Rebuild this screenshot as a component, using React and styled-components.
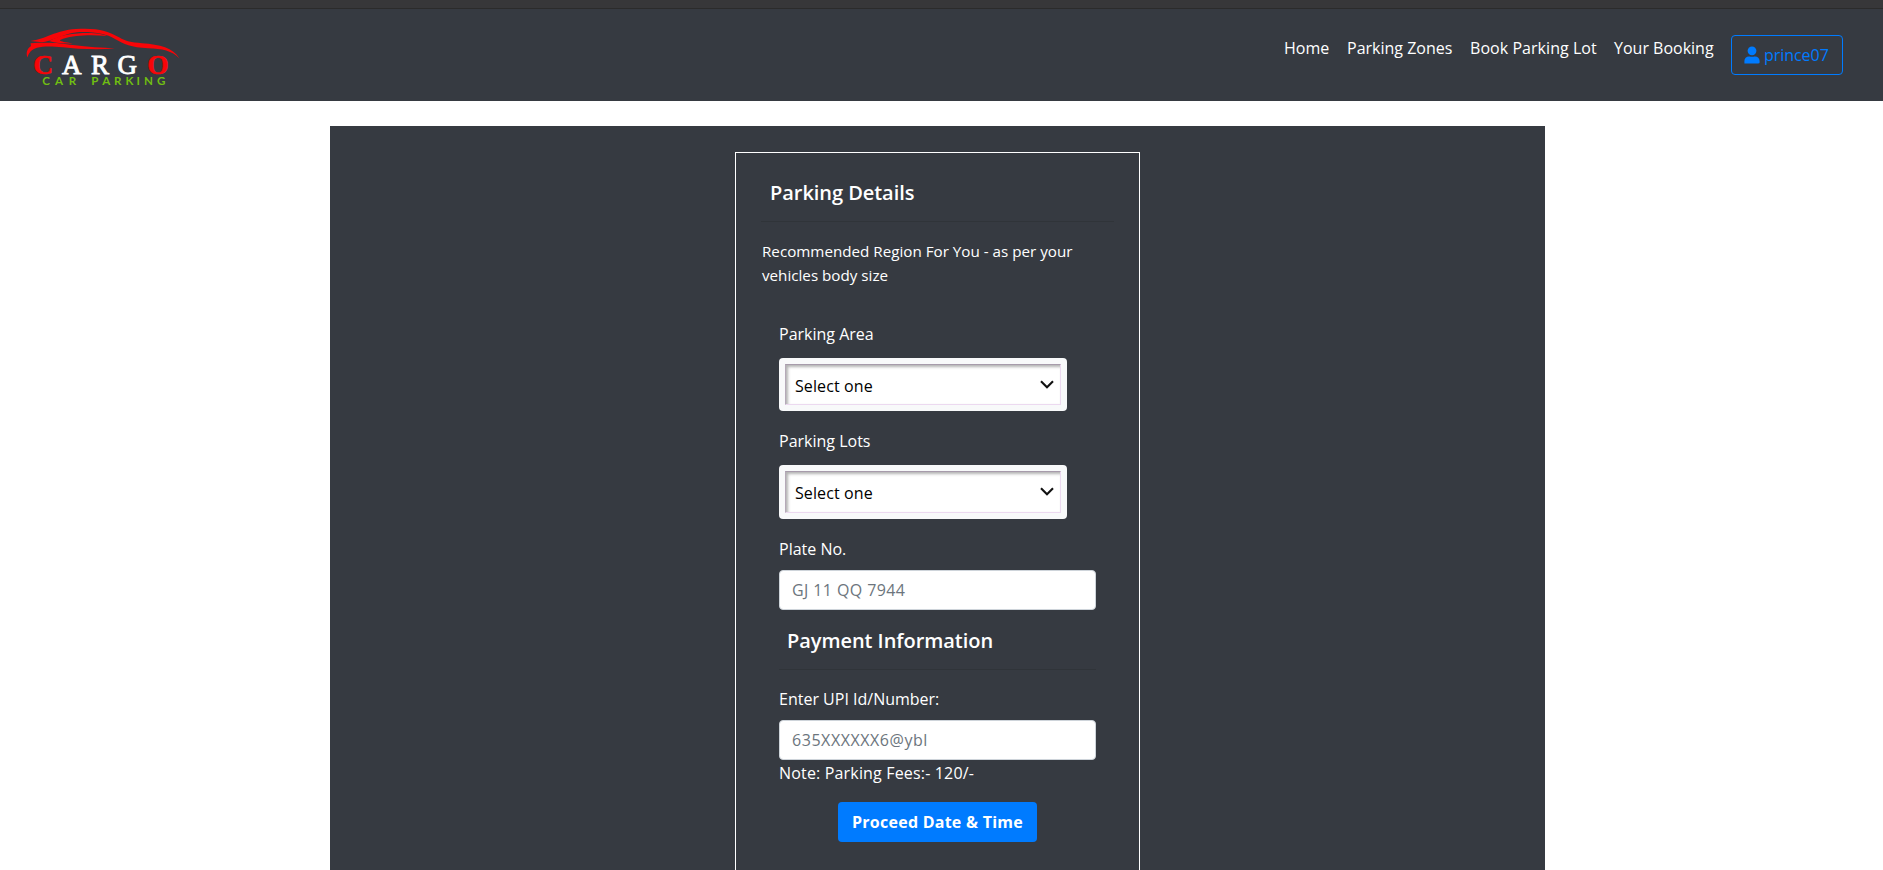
import React from "react";
import styled, { createGlobalStyle } from "styled-components";

const GlobalStyle = createGlobalStyle`
  *, *::before, *::after { box-sizing: border-box; }
  html, body { margin: 0; height: 100%; overflow: hidden; background: #fff; }
  body {
    font-family: "Segoe UI", "Open Sans", "Noto Sans", sans-serif;
    font-size: 16px;
    line-height: 24px;
    color: #fff;
  }
`;

const Page = styled.div`
  height: 870px;
  overflow: hidden;
  display: flex;
  flex-direction: column;
`;

const TopStrip = styled.div`
  flex: none;
  height: 9px;
  background: #373739;
  border-bottom: 1px solid #2b2b2b;
`;

const Header = styled.header`
  flex: none;
  height: 92px;
  background: #363a41;
  display: flex;
  justify-content: space-between;
  align-items: flex-start;
  padding: 15px 40px 0 22px;
`;

const Logo = styled.svg`
  display: block;
  width: 162px;
  height: 66px;
`;

const Nav = styled.nav`
  display: flex;
  align-items: flex-start;
  padding-top: 11px;
`;

const NavLink = styled.a`
  width: ${(p) => p.$w}px;
  padding: 1px 0 0 1px;
  letter-spacing: ${(p) => p.$ls || 0}px;
  white-space: nowrap;
`;

const UserButton = styled.button`
  display: flex;
  align-items: center;
  width: 112px;
  height: 40px;
  padding: 0 0 1px 12px;
  border: 1px solid #007bff;
  border-radius: 4px;
  background: transparent;
  color: #007bff;
  font: inherit;
  letter-spacing: -0.05px;
  gap: 4px;
`;

const Panel = styled.main`
  flex: none;
  width: 1215px;
  height: 744px;
  margin: 25px 0 0 330px;
  padding-top: 26px;
  background: #363a41;
  display: flex;
  justify-content: center;
`;

const Card = styled.section`
  width: 405px;
  height: 760px;
  border: 1px solid #fff;
  padding: 25px 25px 0;
`;

const Heading = styled.h5`
  margin: 0;
  padding: 3px 0 0 ${(p) => p.$indent || 8}px;
  height: 44px;
  font-size: 20px;
  font-weight: 600;
  line-height: 24px;
  letter-spacing: -0.05px;
  border-bottom: 1px solid #303439;
`;

const Intro = styled.p`
  margin: 17px 0 0 1px;
  font-size: 15.2px;
  white-space: nowrap;
`;

const Form = styled.form`
  margin: 34px 18px 0;
  display: flex;
  flex-direction: column;
`;

const Label = styled.label`
  height: 24px;
  padding-top: 1px;
  letter-spacing: ${(p) => p.$ls || 0}px;
  white-space: nowrap;
`;

const Select = styled.div`
  width: 288px;
  height: ${(p) => p.$h}px;
  margin: 13px 0 17px;
  padding: 6px;
  border-radius: 4px;
  background: #f8f9fa;
`;

const SelectInner = styled.div`
  height: 100%;
  display: flex;
  align-items: center;
  justify-content: space-between;
  padding: 2px 6px 0 9px;
  background: #fff;
  color: #000;
  border: 1px solid #ecd9f0;
  border-top-color: #a79bab;
  border-left-color: #b5a9b8;
  box-shadow: inset 2px 2px 3px rgba(0, 0, 0, 0.3);
  letter-spacing: 0.1px;
`;

const Chevron = styled.svg`
  display: block;
  width: 14px;
  height: 9px;
  margin-bottom: 3px;
`;

const Input = styled.input`
  display: block;
  width: 100%;
  height: 40px;
  margin-top: 9.5px;
  padding: 1px 12px 0;
  border: 1px solid #ced4da;
  border-radius: 4px;
  background: #fff;
  font: inherit;
  letter-spacing: ${(p) => p.$ls || 0}px;
  &::placeholder { color: #6c757d; opacity: 1; }
`;

const Submit = styled.button`
  align-self: center;
  width: 199px;
  height: 40px;
  margin-top: 18px;
  padding: 1px 0 0;
  border: 0;
  border-radius: 4px;
  background: #007bff;
  color: #fff;
  font: inherit;
  font-weight: 700;
  letter-spacing: 0.25px;
`;

const PaymentHeader = styled.div`
  margin: 16px 0 16.5px;
`;

function CargoLogo() {
  return (
    <Logo viewBox="22 24 162 66" role="img">
      <g fill="#f80508">
        <path d="M30.5 41 C46 39 55 30.5 76 29 C97 27.6 108 31 119 37.2 C126 41.4 131 42 142 43.2 C160 44.5 173 47.5 179.5 58.5 C172 50.5 162 48.6 148 48.2 C131 47.6 124 44 115 39 C106 33.8 95 31.6 77 32.2 C64 33.5 50 42 42 42.2 Z" />
        <path d="M49 41 C60 35 73 33 88 33 C97 33 102 34 107 36 C92 34.5 75 35 64 38.5 C58 40.5 57 41 73 43.4 C65 43.6 56 43.2 49 41 Z" />
        <path d="M30.5 43.2 C50 42 61 43 73 45.1 C88 47.3 102 47.5 115 48.6 C95 49.8 77 49 63 47.2 C50 46 43 46.2 37 47.8 C31.5 49.5 29 52.5 27.4 57.5 C25.6 52 27.5 48.6 31 46 Z" />
      </g>
      <g
        fontFamily='"Liberation Serif", serif'
        fontWeight="700"
        fontSize="27.5"
        strokeWidth="0.5"
      >
        <text x="33.3" y="73.5" fill="#f80508" stroke="#f80508">C</text>
        <text x="62 91 117.5" y="73.5" fill="#fff" stroke="#fff" fontWeight="400" strokeWidth="0.9" fontSize="27">ARG</text>
        <text x="147.2" y="73.5" fill="#f80508" stroke="#f80508">O</text>
      </g>
      <text
        x="42.3 55 68.8 80 91.3 102.2 114 125.5 136.5 144 157"
        y="84.5"
        fill="#70be12"
        fontFamily="Lato, sans-serif"
        fontWeight="700"
        fontSize="11.6"
      >
        CAR PARKING
      </text>
    </Logo>
  );
}

function UserIcon() {
  return (
    <svg width="16" height="18" viewBox="0 0 16 18" fill="#007bff">
      <circle cx="8" cy="4.8" r="4.4" />
      <path d="M.4 17.4V15C.4 12.3 2.3 10.4 5 10.4h.5c1.6.6 3.4.6 5 0h.5c2.7 0 4.6 1.9 4.6 4.6v1.2c0 .8-.5 1.2-1.2 1.2Z" />
    </svg>
  );
}

function SelectBox({ h }) {
  return (
    <Select $h={h}>
      <SelectInner>
        Select one
        <Chevron viewBox="0 0 14 9" fill="none" stroke="#111" strokeWidth="2.1">
          <path d="M1 1.2 7 7.2 13 1.2" />
        </Chevron>
      </SelectInner>
    </Select>
  );
}

export default function App() {
  return (
    <Page>
      <GlobalStyle />
      <TopStrip />
      <Header>
        <CargoLogo />
        <Nav>
          <NavLink $w={63}>Home</NavLink>
          <NavLink $w={123}>Parking Zones</NavLink>
          <NavLink $w={144} $ls={0.05}>Book Parking Lot</NavLink>
          <NavLink $w={118}>Your Booking</NavLink>
          <UserButton>
            <UserIcon />
            prince07
          </UserButton>
        </Nav>
      </Header>
      <Panel>
        <Card>
          <Heading $indent={9}>Parking Details</Heading>
          <Intro>
            Recommended Region For You - as per your
            <br />
            vehicles body size
          </Intro>
          <Form>
            <Label>Parking Area</Label>
            <SelectBox h={53} />
            <Label>Parking Lots</Label>
            <SelectBox h={54} />
            <Label>Plate No.</Label>
            <Input placeholder="GJ 11 QQ 7944" $ls={0.4} />
            <PaymentHeader>
              <Heading>Payment Information</Heading>
            </PaymentHeader>
            <Label>Enter UPI Id/Number:</Label>
            <Input placeholder="635XXXXXX6@ybl" $ls={0.55} />
            <Label $ls={0.17}>Note: Parking Fees:- 120/-</Label>
            <Submit type="button">Proceed Date &amp; Time</Submit>
          </Form>
        </Card>
      </Panel>
    </Page>
  );
}
